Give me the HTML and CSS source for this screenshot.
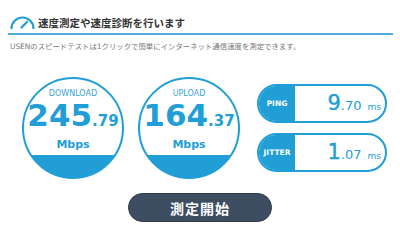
FILE: index.html
```html
<!DOCTYPE html>
<html lang="ja">
<head>
    <meta charset="UTF-8">
    <meta name="viewport" content="width=device-width, initial-scale=1.0">
    <title>USEN スピードテスト</title>
    <link rel="stylesheet" href="styles.css">
</head>
<body>
    <div class="header">
        <svg class="header-icon" width="25" height="13" viewBox="0 0 25 13">
            <path d="M1.5 12.5 A11 11 0 0 1 23.5 12.5" fill="none" stroke="#219ed6" stroke-width="2.2" stroke-linecap="round"/>
            <path d="M11.5 11.5 L17 6" fill="none" stroke="#219ed6" stroke-width="2.2" stroke-linecap="round"/>
        </svg>
        <h1>速度測定や速度診断を行います</h1>
    </div>
    <p class="lead">USENのスピードテストは1クリックで簡単にインターネット通信速度を測定できます。</p>

    <div class="meters">
        <div class="gauge">
            <div class="gauge-label">DOWNLOAD</div>
            <div class="gauge-value"><span class="big">245</span><span class="small">.79</span></div>
            <div class="gauge-unit">Mbps</div>
        </div>
        <div class="gauge">
            <div class="gauge-label">UPLOAD</div>
            <div class="gauge-value"><span class="big">164</span><span class="small">.37</span></div>
            <div class="gauge-unit">Mbps</div>
        </div>
        <div class="stats">
            <div class="stat">
                <div class="stat-label">PING</div>
                <div class="stat-value"><span class="big">9</span><span class="small">.70</span><span class="unit">ms</span></div>
            </div>
            <div class="stat">
                <div class="stat-label">JITTER</div>
                <div class="stat-value"><span class="big">1</span><span class="small">.07</span><span class="unit">ms</span></div>
            </div>
        </div>
    </div>

    <button class="start">測定開始</button>
</body>
</html>
```

FILE: styles.css
```css
body {
    font-family: 'DejaVu Sans', 'Noto Sans CJK JP', sans-serif;
    background-color: #fff;
    color: #333;
    margin: 0;
    padding: 0;
}
.header {
    display: flex;
    align-items: center;
    gap: 3px;
    margin: 0 7px 0 8px;
    padding: 16px 0 4px 2px;
    border-bottom: 2px solid #4ea8d8;
}
.header-icon {
    display: block;
}
h1 {
    font-family: 'Noto Sans CJK JP', sans-serif;
    font-size: 10.5px;
    line-height: 13px;
    font-weight: bold;
    color: #333;
    margin: 0;
}
.lead {
    font-family: 'DejaVu Sans', 'Noto Sans CJK JP', sans-serif;
    font-size: 7.4px;
    line-height: 10px;
    color: #777;
    margin: 7px 8px 0 10px;
}
.meters {
    display: flex;
    align-items: center;
    gap: 14px;
    margin-top: 25px;
    padding-left: 22px;
}
.gauge {
    width: 102px;
    height: 102px;
    box-sizing: border-box;
    border: 2px solid #219ed6;
    border-radius: 50%;
    background: linear-gradient(to bottom, #fff 77.6%, #219ed6 77.6%);
    text-align: center;
    color: #219ed6;
    white-space: nowrap;
}
.gauge-label {
    font-size: 8px;
    line-height: 10px;
    margin-top: 10px;
    color: #3aa5d8;
}
.gauge-value {
    line-height: 30px;
    margin-top: 1px;
    font-weight: bold;
}
.gauge-value .big {
    font-size: 31px;
}
.gauge-value .small {
    font-size: 15px;
}
.gauge-unit {
    font-size: 11px;
    line-height: 12px;
    font-weight: bold;
    margin-top: 3px;
}
.stats {
    display: flex;
    flex-direction: column;
    gap: 10px;
    margin-left: 3px;
}
.stat {
    display: flex;
    width: 130px;
    height: 39px;
    box-sizing: border-box;
    border: 2px solid #219ed6;
    border-radius: 20px;
    overflow: hidden;
}
.stat-label {
    width: 36px;
    background-color: #219ed6;
    color: #fff;
    font-size: 7.5px;
    font-weight: bold;
    display: flex;
    align-items: center;
    justify-content: center;
}
.stat-value {
    flex: 1;
    text-align: right;
    padding-right: 4px;
    line-height: 35px;
    color: #219ed6;
    white-space: nowrap;
}
.stat-value .big {
    font-size: 21px;
    -webkit-text-stroke: 0.4px #219ed6;
}
.stat-value .small {
    font-size: 13px;
}
.stat-value .unit {
    font-size: 9px;
    margin-left: 6px;
}
.start {
    display: block;
    width: 144px;
    height: 29px;
    margin: 14px auto 0;
    background-color: #3d4e62;
    border: 1px solid #2a3848;
    border-radius: 15px;
    color: #fff;
    font-family: 'Noto Sans CJK JP', sans-serif;
    font-size: 14px;
    font-weight: bold;
    letter-spacing: 1px;
    cursor: pointer;
}
```
